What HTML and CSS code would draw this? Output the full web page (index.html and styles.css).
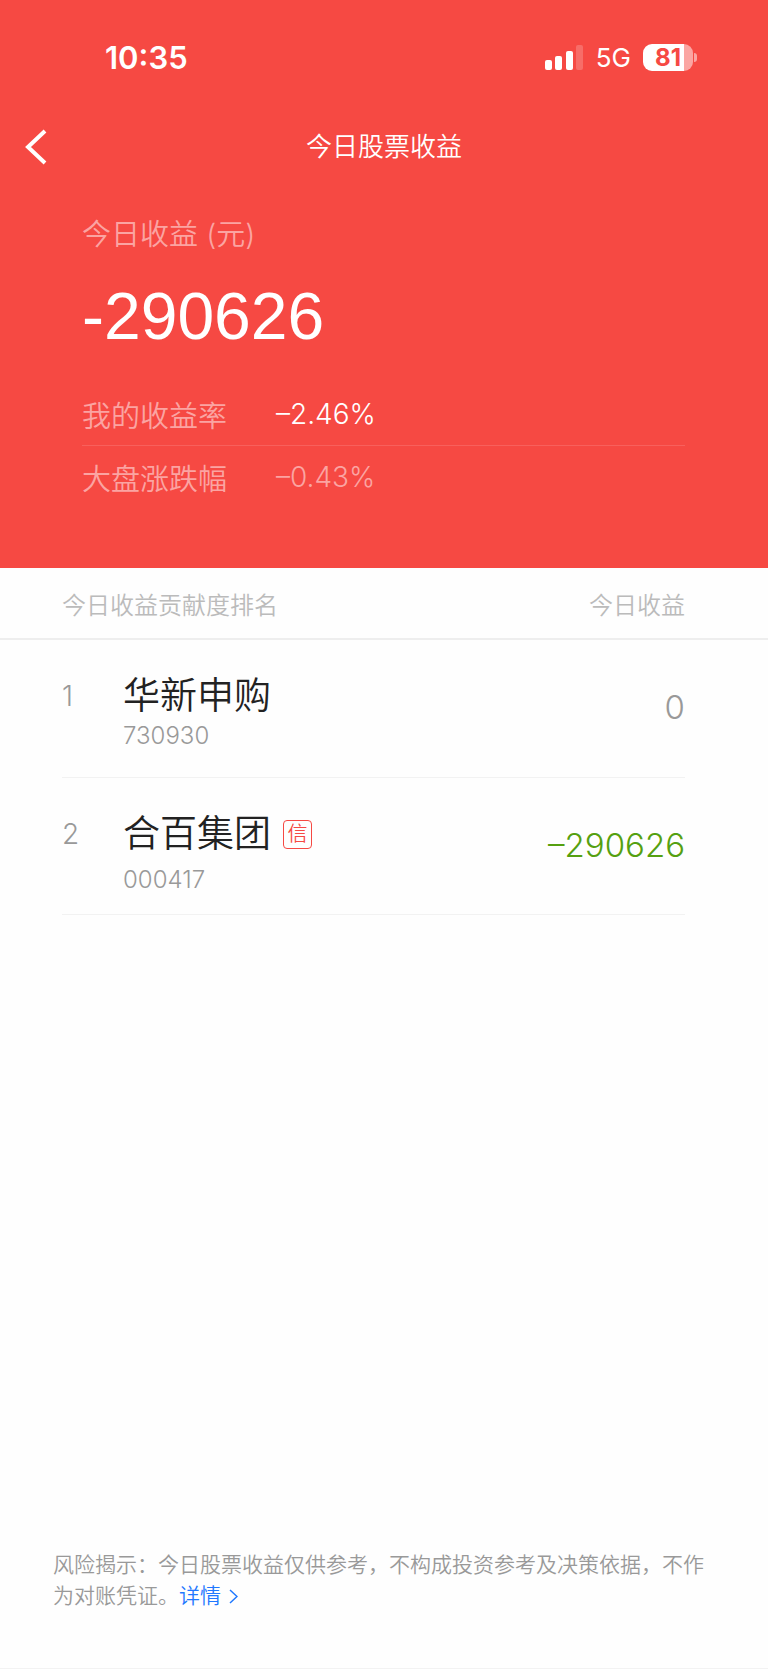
FILE: index.html
```html
<!DOCTYPE html>
<html lang="zh-CN">
<head>
  <meta charset="UTF-8" />
  <meta name="viewport" content="width=device-width, initial-scale=1.0"/>
  <title>今日股票收益</title>
  <link rel="stylesheet" href="styles.css">
</head>
<body>

  <header>
    <div class="status-bar">
      <span class="time">10:35</span>
      <div class="status-right">
        <svg class="signal" width="38" height="25" viewBox="0 0 38 25" fill="#fff" aria-hidden="true">
          <rect x="0" y="15" width="7" height="10" rx="2"/>
          <rect x="10" y="11" width="7" height="14" rx="2"/>
          <rect x="21" y="6" width="7" height="19" rx="2"/>
          <rect x="31" y="0" width="7" height="25" rx="2" opacity="0.2"/>
        </svg>
        <span class="network">5G</span>
        <div class="battery"><span class="battery-level">81</span></div>
      </div>
    </div>

    <nav>
      <button class="back-btn" aria-label="返回">
        <svg width="22" height="36" viewBox="0 0 22 36" fill="none" stroke="#fff" stroke-width="4" aria-hidden="true">
          <path d="M20 2L3 18L20 34"/>
        </svg>
      </button>
      <h1>今日股票收益</h1>
    </nav>

    <section class="summary">
      <p class="summary-label">今日收益 (元)</p>
      <p class="total">-290626</p>
      <dl>
        <div class="rate">
          <dt>我的收益率</dt>
          <dd>–2.46%</dd>
        </div>
        <div class="rate market">
          <dt>大盘涨跌幅</dt>
          <dd>–0.43%</dd>
        </div>
      </dl>
    </section>
  </header>

  <main>
    <table class="ranking">
      <thead>
        <tr>
          <th>今日收益贡献度排名</th>
          <th>今日收益</th>
        </tr>
      </thead>
      <tbody>
        <tr>
          <td class="rank">1</td>
          <td class="stock">
            <div class="name">华新申购</div>
            <div class="code">730930</div>
          </td>
          <td class="profit">0</td>
        </tr>
        <tr class="margin-stock">
          <td class="rank">2</td>
          <td class="stock">
            <div class="name">合百集团<span class="tag">信</span></div>
            <div class="code">000417</div>
          </td>
          <td class="profit down">–290626</td>
        </tr>
      </tbody>
    </table>
  </main>

  <footer>
    <p>风险揭示：今日股票收益仅供参考，不构成投资参考及决策依据，不作为对账凭证。<a href="#">详情<svg width="9" height="15" viewBox="0 0 9 15" fill="none" stroke="currentColor" stroke-width="1.5" aria-hidden="true"><path d="M1 1L8 7.5L1 14"/></svg></a></p>
  </footer>

</body>
</html>
```
FILE: styles.css
```css
* { margin: 0; padding: 0; box-sizing: border-box; }

body {
  font-family: Inter, 'Noto Sans CJK SC', sans-serif;
  font-weight: 350;
  background: #fefefe;
  color: #222;
  min-height: 100vh;
  display: flex;
  flex-direction: column;
}

header {
  background-color: #f64943;
  color: white;
  padding-bottom: 61px;
}

/* --- Status bar --- */
.status-bar {
  display: flex;
  justify-content: space-between;
  align-items: center;
  height: 114px;
  padding: 0 75px 0 105px;
}

.time {
  font-size: 31px;
  font-weight: 600;
}

.status-right {
  display: flex;
  align-items: center;
}

.network {
  font-size: 26px;
  font-weight: 400;
  margin: 0 12px 0 13px;
}

.battery {
  position: relative;
  width: 50px;
  height: 27px;
  border-radius: 9px;
  background: linear-gradient(to right, #fff 81%, #fba5a2 81%);
}

.battery::after {
  content: "";
  position: absolute;
  left: 51px;
  top: 9px;
  width: 3px;
  height: 9px;
  border-radius: 0 4px 4px 0;
  background: #fba5a2;
}

.battery-level {
  display: block;
  color: #f64943;
  font-size: 24px;
  font-weight: 700;
  line-height: 27px;
  text-align: center;
}

/* --- Title bar --- */
nav {
  display: grid;
  grid-template-columns: 72px 1fr 72px;
  align-items: center;
  height: 66px;
}

.back-btn {
  display: flex;
  align-items: center;
  height: 66px;
  padding-left: 25px;
  border: none;
  background: none;
  cursor: pointer;
}

h1 {
  font-size: 26px;
  font-weight: 350;
  line-height: 40px;
  text-align: center;
}

/* --- Profit summary --- */
.summary {
  padding: 32px 83px 0 82px;
}

.summary-label {
  color: #fba4a2;
  font-size: 29px;
  line-height: 46px;
}

.total {
  font-family: 'Liberation Sans', sans-serif;
  font-size: 66px;
  font-weight: 400;
  line-height: 76px;
  margin: 20px 0 29px;
}

.rate {
  display: flex;
  align-items: center;
  height: 62px;
  font-size: 28px;
}

.rate dt {
  color: #fba4a2;
  width: 194px;
  font-size: 29px;
}

.rate.market {
  border-top: 1px solid #f8605c;
}

.rate.market dd {
  color: #fba4a2;
}

/* --- Ranking --- */
main {
  flex: 1;
}

.ranking,
.ranking thead,
.ranking tbody {
  display: block;
}

.ranking tr {
  display: flex;
}

.ranking thead tr {
  justify-content: space-between;
  align-items: center;
  height: 72px;
  padding: 0 83px 0 62px;
  border-bottom: 2px solid #eee;
}

.ranking th {
  color: #bbb;
  font-size: 24px;
  font-weight: 350;
}

.ranking tbody tr {
  height: 138px;
  margin: 0 83px 0 62px;
  border-bottom: 1px solid #f2f2f2;
}

.ranking .margin-stock {
  height: 137px;
}

.rank {
  width: 61px;
  padding-top: 32px;
  color: #999;
  font-size: 28px;
  line-height: 48px;
}

.stock {
  flex: 1;
  padding-top: 32px;
}

.name {
  display: flex;
  align-items: center;
  font-size: 37px;
  line-height: 48px;
}

.code {
  color: #999;
  font-size: 24px;
  line-height: 32px;
}

.margin-stock .code {
  margin-top: 6px;
}

.tag {
  width: 29px;
  height: 29px;
  margin-left: 12px;
  border: 1px solid #f64943;
  border-radius: 4px;
  color: #f64943;
  font-size: 20px;
  line-height: 27px;
  text-align: center;
}

.profit {
  padding-top: 43px;
  color: #999;
  font-size: 33px;
  line-height: 48px;
}

.profit.down {
  color: #55a010;
}

/* --- Disclaimer --- */
footer {
  padding: 0 53px 57px;
  border-bottom: 1px solid #f2f2f2;
}

footer p {
  color: #999;
  font-size: 21px;
  line-height: 31px;
}

footer a {
  color: #1f78ff;
  text-decoration: none;
}

footer a svg {
  margin-left: 8px;
  vertical-align: -1px;
}
```
